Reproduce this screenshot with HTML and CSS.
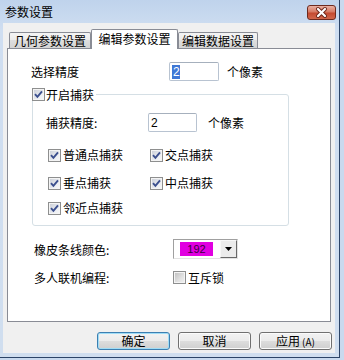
FILE: index.html
```html
<!DOCTYPE html>
<html lang="zh-CN">
<head>
<meta charset="utf-8">
<title>参数设置</title>
<link rel="stylesheet" href="styles.css">
</head>
<body>
<div class="window">
  <div class="titlebar">
    <span class="title">参数设置</span>
    <span class="close">
      <svg width="27" height="13" viewBox="0 0 27 13">
        <path d="M10 3 L17 10 M17 3 L10 10" fill="none" stroke="#6b2417" stroke-width="4" stroke-linecap="round"/>
        <path d="M10 3 L17 10 M17 3 L10 10" fill="none" stroke="#ffffff" stroke-width="2.2" stroke-linecap="round"/>
      </svg>
    </span>
  </div>
  <div class="client">
    <div class="tabs">
      <div class="tab tab-1">几何参数设置</div>
      <div class="tab tab-2 active">编辑参数设置</div>
      <div class="tab tab-3">编辑数据设置</div>
    </div>
    <div class="panel">
      <div class="row row-sel">
        <span class="label label-sel">选择精度</span>
        <span class="textbox tb-sel"><span class="selected">2</span></span>
        <span class="unit unit-sel">个像素</span>
      </div>
      <fieldset class="group">
        <legend class="group-title">
          <span class="cb checked"><svg width="11" height="11" viewBox="0 0 11 11"><path d="M2 5.2 L4.4 7.8 L9 2.4" fill="none" stroke="#3b4f8e" stroke-width="1.9"/></svg></span>
          <span class="check-text">开启捕获</span>
        </legend>
        <div class="group-body">
          <div class="row row-snap">
            <span class="label label-snap">捕获精度:</span>
            <span class="textbox tb-snap">2</span>
            <span class="unit unit-snap">个像素</span>
          </div>
          <div class="snap-grid">
            <div class="check"><span class="cb checked"><svg width="11" height="11" viewBox="0 0 11 11"><path d="M2 5.2 L4.4 7.8 L9 2.4" fill="none" stroke="#3b4f8e" stroke-width="1.9"/></svg></span><span class="check-text">普通点捕获</span></div>
            <div class="check"><span class="cb checked"><svg width="11" height="11" viewBox="0 0 11 11"><path d="M2 5.2 L4.4 7.8 L9 2.4" fill="none" stroke="#3b4f8e" stroke-width="1.9"/></svg></span><span class="check-text">交点捕获</span></div>
            <div class="check"><span class="cb checked"><svg width="11" height="11" viewBox="0 0 11 11"><path d="M2 5.2 L4.4 7.8 L9 2.4" fill="none" stroke="#3b4f8e" stroke-width="1.9"/></svg></span><span class="check-text">垂点捕获</span></div>
            <div class="check"><span class="cb checked"><svg width="11" height="11" viewBox="0 0 11 11"><path d="M2 5.2 L4.4 7.8 L9 2.4" fill="none" stroke="#3b4f8e" stroke-width="1.9"/></svg></span><span class="check-text">中点捕获</span></div>
            <div class="check"><span class="cb checked"><svg width="11" height="11" viewBox="0 0 11 11"><path d="M2 5.2 L4.4 7.8 L9 2.4" fill="none" stroke="#3b4f8e" stroke-width="1.9"/></svg></span><span class="check-text">邻近点捕获</span></div>
          </div>
        </div>
      </fieldset>
      <div class="row row-color">
        <span class="label label-wide">橡皮条线颜色:</span>
        <span class="combo">
          <span class="swatch">192</span>
          <span class="dd"><svg width="7" height="4" viewBox="0 0 7 4"><path d="M0 0 H7 L3.5 4 Z" fill="#000"/></svg></span>
        </span>
      </div>
      <div class="row row-lock">
        <span class="label label-wide">多人联机编程:</span>
        <span class="cb unchecked"></span>
        <span class="check-text">互斥锁</span>
      </div>
    </div>
    <div class="buttons">
      <span class="btn default">确定</span>
      <span class="btn">取消</span>
      <span class="btn">应用<span class="accel">(A)</span></span>
    </div>
  </div>
</div>
</body>
</html>
```

FILE: styles.css
```css
html, body {
  margin: 0;
  padding: 0;
}

body {
  width: 344px;
  height: 360px;
  overflow: hidden;
  background: #c9d9ee;
  font-family: "Noto Sans CJK SC", "Liberation Sans", sans-serif;
  font-size: 12px;
  color: #000;
}

.window {
  width: 339px;
  height: 357px;
  border-right: 1px solid #2c4467;
  border-bottom: 1px solid #2c4467;
  background: linear-gradient(#bfd3ec, #cfdef1 30px, #d0deef);
  display: flex;
  flex-direction: column;
}

.titlebar {
  height: 23px;
  flex: none;
  display: flex;
  align-items: center;
  justify-content: space-between;
  padding: 0 3px 0 5px;
}

.title {
  line-height: 14px;
}

.close {
  box-sizing: border-box;
  align-self: flex-start;
  width: 29px;
  height: 15px;
  margin-top: 5px;
  border: 1px solid #6e2a1e;
  border-radius: 3px;
  background: linear-gradient(#eab0a2, #d67a63 45%, #c44a30 55%, #d2674b);
  display: flex;
  align-items: center;
  justify-content: center;
}

.close svg {
  display: block;
}

.client {
  flex: 1;
  margin: 0 4px 4px 3px;
  background: #f0f0f0;
  display: flex;
  flex-direction: column;
}

/* tabs */
.tabs {
  display: flex;
  align-items: flex-end;
  height: 20px;
  margin: 6px 0 0 6px;
  position: relative;
  z-index: 1;
}

.tab {
  box-sizing: border-box;
  height: 16px;
  margin-bottom: 1px;
  border: 1px solid #898c95;
  border-bottom: none;
  border-radius: 2px 2px 0 0;
  background: linear-gradient(#f4f4f4, #ebebeb 50%, #dedede 50%, #d4d4d4);
  text-align: center;
  line-height: 15px;
  white-space: nowrap;
}

.tab-1 { width: 82px; }
.tab-2 { width: 87px; }
.tab-3 { width: 80px; }

.tab.active {
  height: 20px;
  margin-bottom: 0;
  background: #fff;
  line-height: 17px;
}

.panel {
  box-sizing: border-box;
  height: 274px;
  margin: -1px 4px 0;
  border: 1px solid #898c95;
  background: #fff;
  padding-top: 13px;
}

.row {
  display: flex;
  align-items: center;
}

.label {
  white-space: nowrap;
}

.row-sel {
  height: 19px;
  padding-left: 23px;
}

.label-sel { width: 138px; }

.textbox {
  box-sizing: border-box;
  height: 19px;
  border: 1px solid #b8c3d1;
  border-top-color: #a6b0bd;
  border-radius: 2px;
  background: #fff;
  display: flex;
  align-items: center;
  padding-left: 2px;
  font-family: "Liberation Sans", sans-serif;
  font-size: 12px;
}

.tb-sel { width: 50px; }
.tb-snap { width: 49px; }

.selected {
  background: #3f78d6;
  color: #fff;
  line-height: 14px;
  padding: 0 0 0 1px;
}

.unit-sel { margin-left: 8px; }
.unit-snap { margin-left: 11px; }

/* group */
.group {
  box-sizing: border-box;
  width: 257px;
  margin: 7px 0 0 24px;
  padding: 0 0 10px 0;
  border: 1px solid #d5dfe5;
  border-radius: 3px;
  min-inline-size: 0;
}

.group-title {
  display: flex;
  align-items: center;
  height: 13px;
  line-height: 13px;
  margin-left: -1px;
  padding: 0 2px 0 0;
  background: #fff;
}

.group-title .check-text {
  margin-left: 1px;
}

.group-body {
  padding-left: 13px;
}

.row-snap {
  height: 19px;
  margin-top: 12px;
}

.label-snap { width: 102px; }

.snap-grid {
  display: grid;
  grid-template-columns: 102px auto;
  grid-template-rows: 28px 25px 14px;
  margin-top: 16px;
  padding-left: 2px;
}

.check {
  display: flex;
  align-items: center;
  height: 14px;
  white-space: nowrap;
}

.check .check-text {
  margin-left: 2px;
  line-height: 14px;
}

/* checkbox */
.cb {
  box-sizing: border-box;
  display: block;
  flex: none;
  width: 13px;
  height: 13px;
  border: 1px solid #8e8f8f;
  background: linear-gradient(135deg, #c9cdd6, #eef0f4 70%, #f8f8f8);
  box-shadow: inset 0 0 0 1px #f4f4f4;
}

.cb svg {
  display: block;
}

.cb.unchecked {
  background: linear-gradient(135deg, #bdbdbd, #e2e2e2 60%, #f2f2f2);
}

/* color row */
.row-color {
  height: 20px;
  margin: 13px 0 0 26px;
}

.label-wide { width: 139px; }

.combo {
  box-sizing: border-box;
  width: 65px;
  height: 20px;
  border: 1px solid;
  border-color: #a0a0a0 #e3e3e3 #e3e3e3 #a0a0a0;
  background: #fff;
  display: flex;
  align-items: center;
  padding-left: 6px;
}

.swatch {
  width: 33px;
  height: 14px;
  background: #e100e1;
  color: #3c003c;
  font-family: "Liberation Sans", sans-serif;
  font-size: 11px;
  line-height: 14px;
  text-align: center;
}

.dd {
  box-sizing: border-box;
  margin-left: auto;
  width: 17px;
  height: 18px;
  border: 1px solid;
  border-color: #f8f8f8 #696969 #696969 #f8f8f8;
  background: #ececec;
  display: flex;
  align-items: center;
  justify-content: center;
}

.dd svg { display: block; }

.row-lock {
  height: 14px;
  margin: 11px 0 0 26px;
}

.row-lock .check-text {
  margin-left: 2px;
}

/* buttons */
.buttons {
  display: flex;
  justify-content: flex-end;
  gap: 8px;
  margin: 10px 3px 0 0;
}

.btn {
  box-sizing: border-box;
  width: 73px;
  height: 18px;
  border: 1px solid #707070;
  border-radius: 3px;
  background: linear-gradient(#f2f2f2, #ebebeb 50%, #dddddd 50%, #cfcfcf);
  box-shadow: inset 0 0 0 1px #fbfbfb;
  text-align: center;
  line-height: 16px;
  white-space: nowrap;
}

.btn.default {
  border-color: #3c7fb1;
  box-shadow: inset 0 0 0 1px #9fdcf6;
}

.accel {
  font-size: 10px;
  margin-left: 2px;
}
```
